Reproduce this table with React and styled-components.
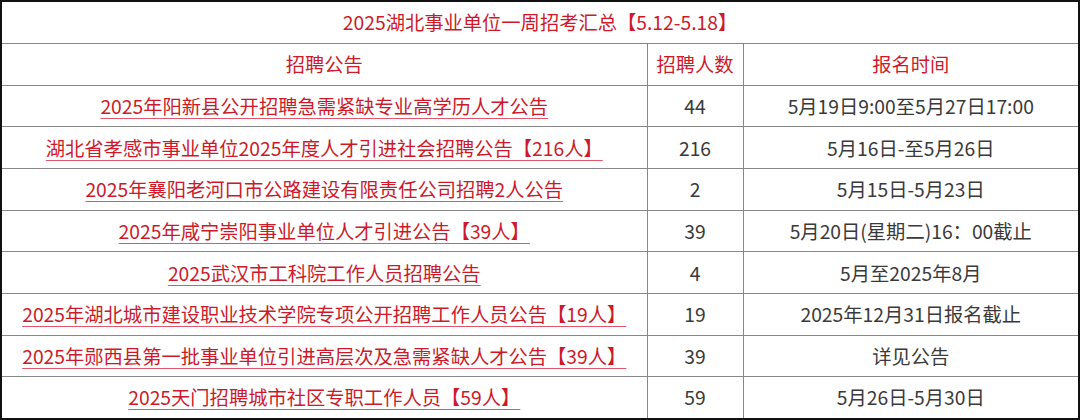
import React from "react";
import styled, { createGlobalStyle } from "styled-components";

const GlobalStyle = createGlobalStyle`
  html, body {
    margin: 0;
    padding: 0;
    background: #fff;
  }
  body {
    font-family: "Noto Sans CJK SC", "Noto Sans", sans-serif;
  }
`;

const Table = styled.table`
  width: 1078px;
  border-collapse: collapse;
  border: 2px solid #111;
  table-layout: fixed;
  font-size: 19.3px;
  color: #333;
`;

const Col = styled.col`
  width: ${(p) => p.w}px;
`;

const Row = styled.tr`
  height: ${(p) => p.h || 41.7}px;
`;

const Cell = styled.td`
  border: 1px solid #888;
  text-align: center;
  vertical-align: middle;
  padding: 0;
  line-height: 24px;
  white-space: nowrap;
  color: ${(p) => (p.red ? "#cc1a2a" : "#3a3a3a")};
`;

const Link = styled.a`
  color: #cc1a2a;
  text-decoration: underline;
  text-decoration-color: #e0566a;
  text-underline-offset: 4px;
  text-decoration-thickness: 1px;
`;

const rows = [
  ["2025年阳新县公开招聘急需紧缺专业高学历人才公告", "44", "5月19日9:00至5月27日17:00"],
  ["湖北省孝感市事业单位2025年度人才引进社会招聘公告【216人】", "216", "5月16日-至5月26日"],
  ["2025年襄阳老河口市公路建设有限责任公司招聘2人公告", "2", "5月15日-5月23日"],
  ["2025年咸宁崇阳事业单位人才引进公告【39人】", "39", "5月20日(星期二)16：00截止"],
  ["2025武汉市工科院工作人员招聘公告", "4", "5月至2025年8月"],
  ["2025年湖北城市建设职业技术学院专项公开招聘工作人员公告【19人】", "19", "2025年12月31日报名截止"],
  ["2025年郧西县第一批事业单位引进高层次及急需紧缺人才公告【39人】", "39", "详见公告"],
  ["2025天门招聘城市社区专职工作人员【59人】", "59", "5月26日-5月30日"],
];

export default function App() {
  return (
    <>
      <GlobalStyle />
      <Table>
        <colgroup>
          <Col w={646} />
          <Col w={96} />
          <Col w={336} />
        </colgroup>
        <tbody>
          <Row h={42}>
            <Cell colSpan={3} red>
              2025湖北事业单位一周招考汇总【5.12-5.18】
            </Cell>
          </Row>
          <Row h={42}>
            <Cell red>招聘公告</Cell>
            <Cell red>招聘人数</Cell>
            <Cell red>报名时间</Cell>
          </Row>
          {rows.map(([title, count, time]) => (
            <Row key={title}>
              <Cell>
                <Link href="#">{title}</Link>
              </Cell>
              <Cell>{count}</Cell>
              <Cell>{time}</Cell>
            </Row>
          ))}
        </tbody>
      </Table>
    </>
  );
}
